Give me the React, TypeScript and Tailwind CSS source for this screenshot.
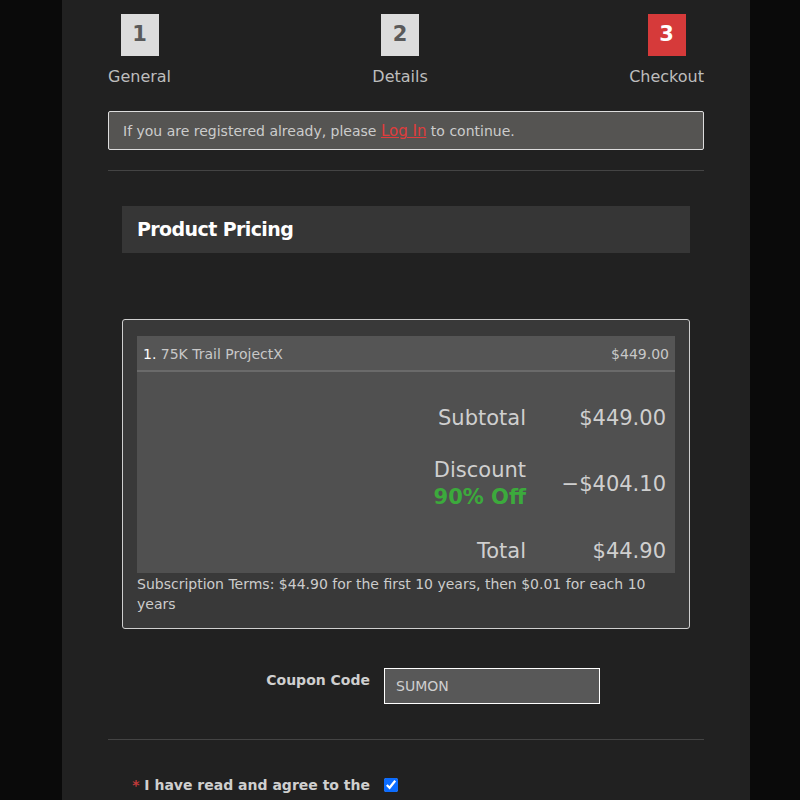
import React from 'react';

const steps = [
  { n: '1', label: 'General', active: false },
  { n: '2', label: 'Details', active: false },
  { n: '3', label: 'Checkout', active: true },
];

export default function App() {
  return (
    <div className="min-h-screen bg-[#0a0a0a] flex justify-center overflow-hidden" style={{ fontFamily: '"DejaVu Sans", Tahoma, sans-serif' }}>
      <div className="w-[688px] ml-[12px] bg-[#212121] min-h-[800px] px-[46px]">
        <div className="flex justify-between pt-[14px]">
          {steps.map((s) => (
            <div key={s.n} className="flex flex-col items-center">
              <div className={`w-[38px] h-[42px] flex items-center justify-center text-[21px] font-bold ${s.active ? 'bg-[#d63a3a] text-white' : 'bg-[#dcdcdc] text-[#5a5a5a]'}`}>
                {s.n}
              </div>
              <div className="mt-[9px] text-[16px] text-[#bdbdbd]">{s.label}</div>
            </div>
          ))}
        </div>

        <div className="mt-[22px] bg-[#555452] border border-[#dddddd] rounded-[2px] h-[39px] flex items-center px-[14px] pt-[2px] text-[14px] text-[#cccccc]">
          If you are registered already, please&nbsp;
          <span className="text-[#e03c3c] underline text-[15px]">Log In</span>
          &nbsp;to continue.
        </div>

        <hr className="mt-[20px] border-[#444444]" />

        <div className="px-[14px]">
          <div className="mt-[35px] bg-[#363636] h-[47px] flex items-center px-[15px] text-[19px] tracking-[-0.6px] font-bold text-white">
            Product Pricing
          </div>

          <div className="mt-[66px] border border-[#cfcfcf] rounded-[3px] bg-[#393939] px-[14px] pt-[16px] pb-[14px]">
            <div className="bg-[#555555] h-[36px] flex items-center justify-between px-[6px] pt-[2px] text-[14px] text-[#c8c8c8] border-b-2 border-[#6a6a6a]">
              <span><span className="text-white">1.</span> 75K Trail ProjectX</span>
              <span>$449.00</span>
            </div>
            <div className="bg-[#505050] h-[201px] flex flex-col justify-between pt-[31px] pb-[7px] text-[21px] leading-[30px] text-[#cfcfcf]">
              <div className="flex justify-end">
                <span className="text-right">Subtotal</span>
                <span className="w-[149px] text-right pr-[9px]">$449.00</span>
              </div>
              <div className="flex justify-end items-center -mt-[2px]">
                <div className="text-right leading-[27px]">
                  <div>Discount</div>
                  <div className="font-bold text-[#3caa3c]">90% Off</div>
                </div>
                <span className="w-[149px] text-right pr-[9px]">−$404.10</span>
              </div>
              <div className="flex justify-end">
                <span className="text-right">Total</span>
                <span className="w-[149px] text-right pr-[9px]">$44.90</span>
              </div>
            </div>
            <div className="mt-[1px] text-[14px] leading-[20px] text-[#cccccc]">
              Subscription Terms: $44.90 for the first 10 years, then $0.01 for each 10 years
            </div>
          </div>
        </div>

        <div className="mt-[39px] flex items-start">
          <div className="w-[262px] text-right text-[14px] font-bold text-[#cfcfcf] pt-[2px]">Coupon Code</div>
          <div className="ml-[14px] w-[216px] h-[36px] bg-[#585858] border border-white flex items-center px-[11px] pt-[1px] text-[14px] text-[#cfcfcf]">
            SUMON
          </div>
        </div>

        <hr className="mt-[35px] border-[#444444]" />

        <div className="mt-[35px] flex items-start">
          <div className="w-[262px] text-right text-[14px] leading-[20px] font-bold text-[#cfcfcf]">
            <div><span className="text-[#c03a3a]">*</span> I have read and agree to the</div>
            <div className="text-[#e03c3c] pr-[100px]">Terms</div>
          </div>
          <input type="checkbox" defaultChecked className="ml-[14px] mt-[3px] w-[14px] h-[14px] accent-[#0b6cff]" />
        </div>
      </div>
    </div>
  );
}
